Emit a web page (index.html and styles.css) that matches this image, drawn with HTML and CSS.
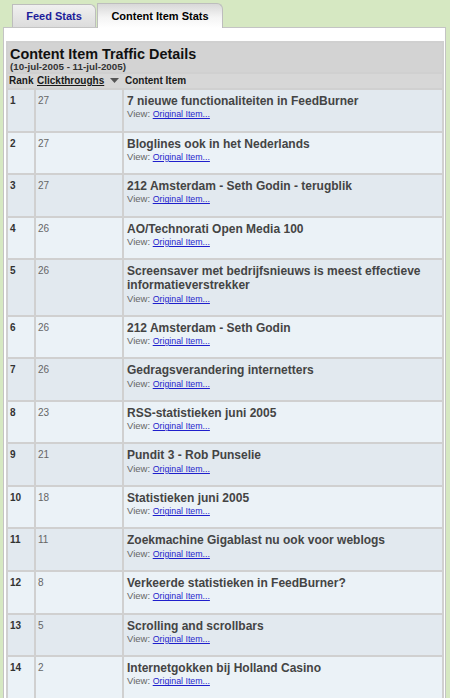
FILE: index.html
```html
<!DOCTYPE html>
<html>
<head>
<meta charset="utf-8">
<link rel="stylesheet" href="styles.css">
</head>
<body>
<div class="tabs">
  <div class="tab">Feed Stats</div>
  <div class="tab active">Content Item Stats</div>
</div>
<div class="panel">
  <table class="stats">
    <colgroup>
      <col class="col-rank">
      <col class="col-clicks">
      <col class="col-item">
    </colgroup>
    <thead>
      <tr>
        <th colspan="3" class="caption-cell">
          <div class="title">Content Item Traffic Details</div>
          <div class="range">(10-jul-2005 - 11-jul-2005)</div>
        </th>
      </tr>
      <tr class="head">
        <th class="c-rank">Rank</th>
        <th class="c-clicks"><span class="sort">Clickthroughs</span><svg class="tri" width="9" height="5" viewBox="0 0 9 5"><path d="M0 0H9L4.5 5Z" fill="#555"/></svg></th>
        <th class="c-item">Content Item</th>
      </tr>
    </thead>
    <tbody>
      <tr><td class="rank">1</td><td class="clicks">27</td><td class="item"><div class="t">7 nieuwe functionaliteiten in FeedBurner</div><div class="v">View: <a href="#">Original Item...</a></div></td></tr>
      <tr><td class="rank">2</td><td class="clicks">27</td><td class="item"><div class="t">Bloglines ook in het Nederlands</div><div class="v">View: <a href="#">Original Item...</a></div></td></tr>
      <tr><td class="rank">3</td><td class="clicks">27</td><td class="item"><div class="t">212 Amsterdam - Seth Godin - terugblik</div><div class="v">View: <a href="#">Original Item...</a></div></td></tr>
      <tr><td class="rank">4</td><td class="clicks">26</td><td class="item"><div class="t">AO/Technorati Open Media 100</div><div class="v">View: <a href="#">Original Item...</a></div></td></tr>
      <tr><td class="rank">5</td><td class="clicks">26</td><td class="item"><div class="t">Screensaver met bedrijfsnieuws is meest effectieve informatieverstrekker</div><div class="v">View: <a href="#">Original Item...</a></div></td></tr>
      <tr><td class="rank">6</td><td class="clicks">26</td><td class="item"><div class="t">212 Amsterdam - Seth Godin</div><div class="v">View: <a href="#">Original Item...</a></div></td></tr>
      <tr><td class="rank">7</td><td class="clicks">26</td><td class="item"><div class="t">Gedragsverandering internetters</div><div class="v">View: <a href="#">Original Item...</a></div></td></tr>
      <tr><td class="rank">8</td><td class="clicks">23</td><td class="item"><div class="t">RSS-statistieken juni 2005</div><div class="v">View: <a href="#">Original Item...</a></div></td></tr>
      <tr><td class="rank">9</td><td class="clicks">21</td><td class="item"><div class="t">Pundit 3 - Rob Punselie</div><div class="v">View: <a href="#">Original Item...</a></div></td></tr>
      <tr><td class="rank">10</td><td class="clicks">18</td><td class="item"><div class="t">Statistieken juni 2005</div><div class="v">View: <a href="#">Original Item...</a></div></td></tr>
      <tr><td class="rank">11</td><td class="clicks">11</td><td class="item"><div class="t">Zoekmachine Gigablast nu ook voor weblogs</div><div class="v">View: <a href="#">Original Item...</a></div></td></tr>
      <tr><td class="rank">12</td><td class="clicks">8</td><td class="item"><div class="t">Verkeerde statistieken in FeedBurner?</div><div class="v">View: <a href="#">Original Item...</a></div></td></tr>
      <tr><td class="rank">13</td><td class="clicks">5</td><td class="item"><div class="t">Scrolling and scrollbars</div><div class="v">View: <a href="#">Original Item...</a></div></td></tr>
      <tr><td class="rank">14</td><td class="clicks">2</td><td class="item"><div class="t">Internetgokken bij Holland Casino</div><div class="v">View: <a href="#">Original Item...</a></div></td></tr>
    </tbody>
  </table>
</div>
</body>
</html>
```
FILE: styles.css
```css
html, body {
  margin: 0;
  padding: 0;
  background: #d6e8c2;
  font-family: "Liberation Sans", Arial, sans-serif;
}

.tabs {
  display: flex;
  align-items: flex-end;
  gap: 1px;
  height: 27px;
  padding-left: 12px;
}

.tab {
  box-sizing: border-box;
  width: 84px;
  height: 23px;
  border: 1px solid #bdbdbd;
  border-bottom: none;
  border-top-right-radius: 6px;
  background: linear-gradient(#f0f0f0, #dcdcdc);
  color: #1c1c9a;
  font-size: 11px;
  font-weight: bold;
  line-height: 22px;
  text-align: center;
}

.tab.active {
  width: 126px;
  height: 25px;
  line-height: 24px;
  margin-bottom: -1px;
  position: relative;
  z-index: 1;
  color: #000;
  background: linear-gradient(#d8d8d8 0%, #f4f4f4 55%, #ffffff 100%);
}

.panel {
  box-sizing: border-box;
  width: 443px;
  margin-left: 3px;
  padding: 13px 1px 0 2px;
  background: #fff;
  border: 1px solid #c4c4c4;
  border-bottom: none;
  min-height: 700px;
}

.stats {
  width: 438px;
  border-collapse: separate;
  border-spacing: 2px;
  background: #d0d0d0;
  table-layout: fixed;
}

.col-rank { width: 26px; }
.col-clicks { width: 86px; }

.stats th, .stats td {
  padding: 0;
  text-align: left;
  vertical-align: top;
}

.caption-cell {
  height: 28px;
  box-sizing: border-box;
  padding: 3px 2px 0 2px !important;
  background: #d3d3d3;
}

.title {
  font-size: 14.4px;
  font-weight: bold;
  line-height: 16px;
  color: #111;
}

.range {
  font-size: 9.8px;
  font-weight: bold;
  line-height: 10px;
  color: #333;
}

.head th {
  height: 14px;
  background: #d7d7d7;
  box-shadow: 2px 0 0 #d7d7d7;
  font-size: 10px;
  font-weight: bold;
  line-height: 14px;
  color: #1a1a1a;
  padding-left: 1px;
  white-space: nowrap;
}

.head th.c-item {
  box-shadow: none;
}

.sort {
  text-decoration: underline;
}

.tri {
  margin-left: 6px;
  vertical-align: 1px;
}

tbody tr:nth-child(odd) td { background: #e2e9ef; }
tbody tr:nth-child(even) td { background: #ebf2f7; }

.rank {
  padding: 4px 2px 0 2px !important;
  font-size: 10px;
  font-weight: bold;
  line-height: 14.33px;
  color: #333;
}

.clicks {
  padding: 4px 2px 0 2px !important;
  font-size: 10px;
  line-height: 14.33px;
  color: #666;
}

.item {
  padding: 4px 3px 10.2px 3px !important;
}

.item .t {
  font-size: 12px;
  font-weight: bold;
  line-height: 14.33px;
  color: #444;
}

.item .v {
  font-size: 9.5px;
  line-height: 12px;
  color: #666;
}

.item .v a {
  font-size: 8.8px;
  color: #1f1fcc;
  text-decoration: underline;
}
```
